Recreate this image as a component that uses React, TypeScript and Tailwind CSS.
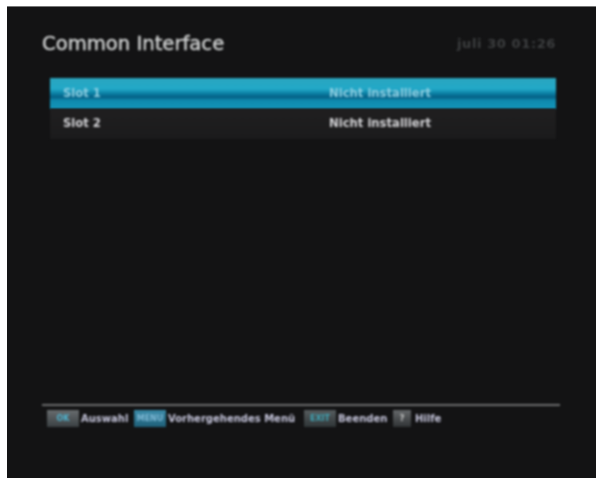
const font = { fontFamily: '"DejaVu Sans", sans-serif' };

function HelpKey({ label, className, width }: { label: string; className: string; width: string }) {
  return (
    <span
      className={`flex h-[17px] ${width} items-center justify-center text-[8px] font-bold leading-none ${className}`}
    >
      {label}
    </span>
  );
}

export default function App() {
  return (
    <div className="h-[484px] w-[601px] overflow-hidden bg-white pl-[7px] pt-[6px]" style={font}>
      <div className="flex h-[472px] w-[589px] flex-col border-t border-t-[#777] bg-[#131314] pl-[35px] pr-[36px]">
        <header className="flex h-[71px] items-start justify-between pt-[25px] blur-[0.8px]">
          <h1 className="text-[19.6px] font-normal leading-[24px] text-[#d0d2d2] [-webkit-text-stroke:0.4px_#d0d2d2]">
            Common Interface
          </h1>
          <span className="mr-[4px] mt-[4px] text-[13px] font-bold leading-[16px] tracking-[0.6px] text-[#3d3f40]">
            juli 30 01:26
          </span>
        </header>

        <div className="ml-[8px] mr-[4px] flex flex-col">
          <div className="flex h-[31px] items-center bg-[linear-gradient(180deg,#2aa5bf_0%,#22a9c8_35%,#0b7fa3_50%,#045f85_62%,#0f8aae_72%,#1394b8_100%)] text-[11.6px] font-bold text-[#8fcfe2] blur-[0.8px]">
            <span className="ml-[13px] w-[266px]">Slot 1</span>
            <span>Nicht installiert</span>
          </div>
          <div className="flex h-[30px] items-center bg-[linear-gradient(180deg,#201f20_0%,#1b1b1c_100%)] text-[11.6px] font-bold text-[#d3d3d6] blur-[0.8px]">
            <span className="ml-[13px] w-[266px]">Slot 2</span>
            <span>Nicht installiert</span>
          </div>
        </div>

        <footer className="mt-[265px] border-t-[2px] border-t-[#6d6e6e] pt-[4px] blur-[0.8px]">
          <div className="flex items-center pl-[5px] text-[10px] font-bold leading-none text-[#c6c6dc]">
            <HelpKey label="OK" width="w-[32px]" className="bg-[linear-gradient(180deg,#686c6e_0%,#3a4043_100%)] text-[#4fb3cf]" />
            <span className="ml-[2px] w-[53px]">Auswahl</span>
            <HelpKey label="MENU" width="w-[32px]" className="bg-[linear-gradient(180deg,#3b8aa8_0%,#1f5f78_100%)] text-[#7fb9d6]" />
            <span className="ml-[2px] w-[136px]">Vorhergehendes Menü</span>
            <HelpKey label="EXIT" width="w-[32px]" className="bg-[linear-gradient(180deg,#565c5e_0%,#2f3537_100%)] text-[#3fa5b5]" />
            <span className="ml-[2px] w-[55px]">Beenden</span>
            <HelpKey label="?" width="w-[18px]" className="bg-[linear-gradient(180deg,#65686a_0%,#303335_100%)] text-[#c8c8c8]" />
            <span className="ml-[4px]">Hilfe</span>
          </div>
        </footer>
      </div>
    </div>
  );
}
